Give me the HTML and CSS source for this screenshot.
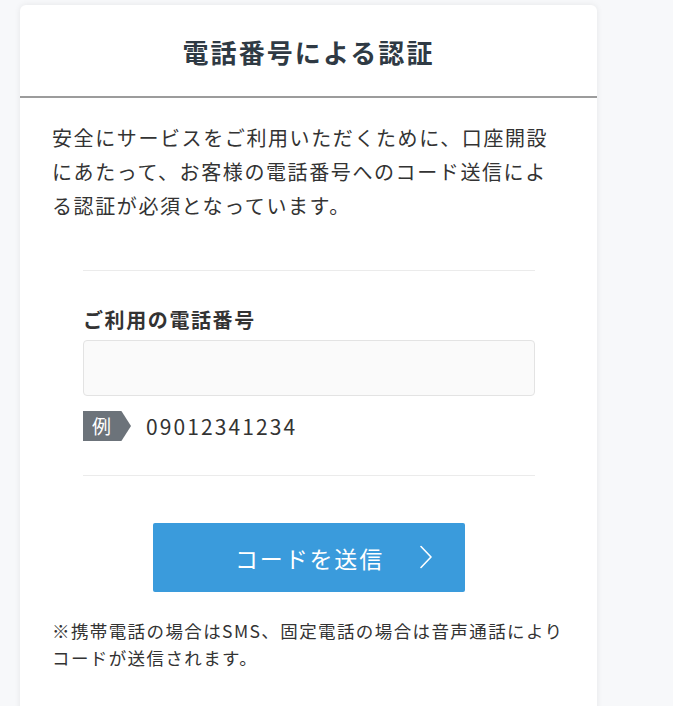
FILE: index.html
```html
<!DOCTYPE html>
<html lang="ja">
<head>
<meta charset="utf-8">
<title>電話番号による認証</title>
<link rel="stylesheet" href="styles.css">
</head>
<body>
<div class="page">
  <div class="card">
    <div class="card-header">
      <h1 class="title">電話番号による認証</h1>
    </div>
    <div class="card-body">
      <p class="lead">安全にサービスをご利用いただくために、口座開設にあたって、お客様の電話番号へのコード送信による認証が必須となっています。</p>
      <div class="field">
        <label class="field-label" for="tel">ご利用の電話番号</label>
        <input class="field-input" id="tel" type="tel">
        <div class="example">
          <span class="example-tag">例</span>
          <span class="example-text">09012341234</span>
        </div>
      </div>
      <div class="actions">
        <button class="send-btn" type="button">
          <span class="send-label">コードを送信</span>
          <svg class="send-chevron" width="12" height="24" viewBox="0 0 12 24" aria-hidden="true">
            <path d="M1 1.5 L11 12 L1 22.5" fill="none" stroke="#ffffff" stroke-width="1.6" stroke-linecap="round" stroke-linejoin="round"/>
          </svg>
        </button>
      </div>
      <p class="note">※携帯電話の場合はSMS、固定電話の場合は音声通話によりコードが送信されます。</p>
    </div>
  </div>
</div>
</body>
</html>
```

FILE: styles.css
```css
html, body {
  margin: 0;
  padding: 0;
  background: #ffffff;
}

body {
  font-family: "Noto Sans CJK JP", "Noto Sans", sans-serif;
  color: #333333;
}

.page {
  width: 673px;
  height: 706px;
  box-sizing: border-box;
  padding: 5px 0 0 20px;
  background: #f7f8fa;
  overflow: hidden;
}

.card {
  width: 577px;
  height: 740px;
  background: #ffffff;
  border-radius: 6px;
  box-shadow: 0 0 6px rgba(0, 0, 0, 0.08);
}

.card-header {
  height: 89px;
  border-bottom: 2px solid #9c9c9c;
  display: flex;
  align-items: center;
  justify-content: center;
  padding-top: 2px;
  box-sizing: content-box;
}

.title {
  margin: 0;
  font-size: 26px;
  font-weight: 700;
  letter-spacing: 0.08em;
  line-height: 34px;
  color: #2f3a44;
}

.card-body {
  padding: 23px 32px 0 32px;
}

.lead {
  margin: 0;
  font-size: 20px;
  line-height: 34px;
  letter-spacing: 0.08em;
  color: #333333;
}

.field {
  margin: 47px 30px 0 31px;
  padding: 34px 0 34px 0;
  border-top: 1px solid #ebebeb;
  border-bottom: 1px solid #ebebeb;
  display: flex;
  flex-direction: column;
}

.field-label {
  font-size: 20px;
  font-weight: 700;
  line-height: 30px;
  letter-spacing: 0.08em;
  color: #333333;
}

.field-input {
  margin-top: 5px;
  height: 56px;
  box-sizing: border-box;
  border: 1px solid #e3e3e3;
  border-radius: 4px;
  background: #fafafa;
  font-size: 20px;
  padding: 0 12px;
}

.example {
  margin-top: 15px;
  display: flex;
  align-items: center;
  gap: 15px;
}

.example-tag {
  width: 48px;
  height: 30px;
  box-sizing: border-box;
  padding-left: 9px;
  background: #6c737a;
  color: #ffffff;
  font-size: 19px;
  line-height: 30px;
  clip-path: polygon(0 0, 80% 0, 100% 50%, 80% 100%, 0 100%);
}

.example-text {
  font-size: 21px;
  line-height: 30px;
  letter-spacing: 0.1em;
  color: #333333;
}

.actions {
  display: flex;
  justify-content: center;
  margin-top: 47px;
}

.send-btn {
  width: 312px;
  height: 69px;
  border: none;
  border-radius: 2px;
  background: #3a9bdc;
  color: #ffffff;
  font-family: "Noto Sans CJK JP", "Noto Sans", sans-serif;
  display: flex;
  align-items: center;
  justify-content: center;
  position: relative;
  padding: 0;
}

.send-label {
  font-size: 23px;
  letter-spacing: 0.08em;
  line-height: 30px;
  margin-left: 2px;
}

.send-chevron {
  position: absolute;
  left: 267px;
  top: 22px;
}

.note {
  margin: 25px 0 0 0;
  font-size: 17.5px;
  line-height: 27px;
  letter-spacing: 0.08em;
  color: #333333;
}
```
